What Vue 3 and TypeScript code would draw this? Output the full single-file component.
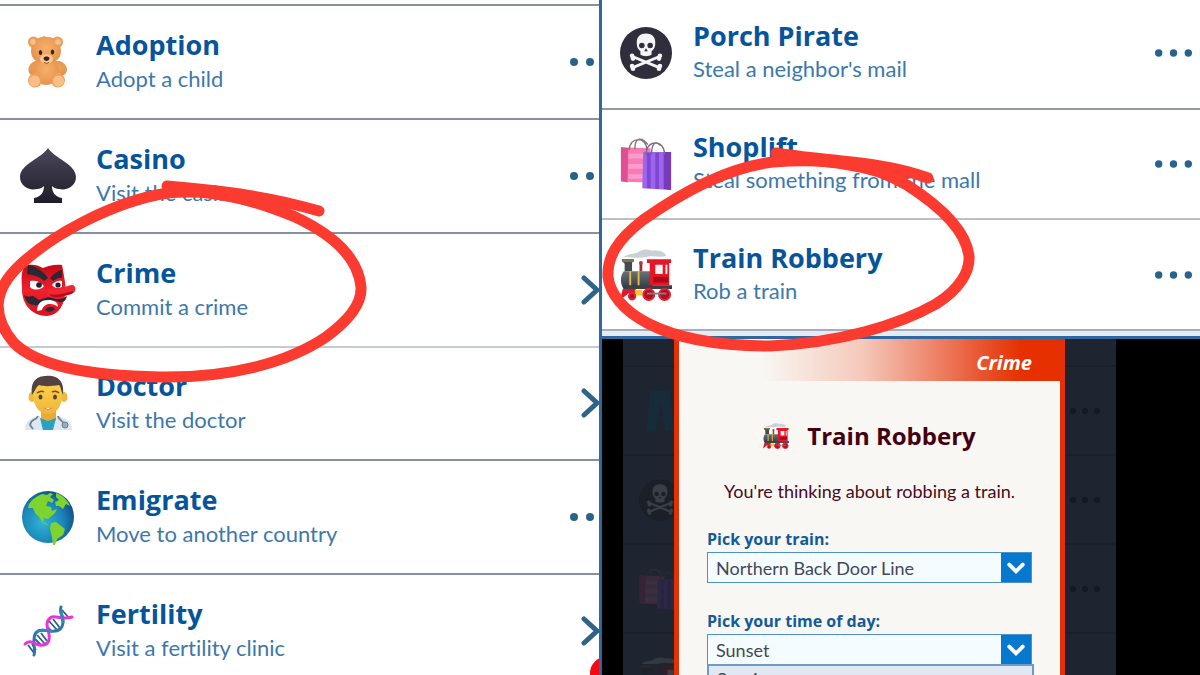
<script setup lang="ts">
import { ref } from 'vue'

interface Item {
  icon: string
  title: string
  text: string
  action: 'dots' | 'arrow'
}

const activities: Item[] = [
  { icon: 'bear', title: 'Adoption', text: 'Adopt a child', action: 'dots' },
  { icon: 'spade', title: 'Casino', text: 'Visit the casino', action: 'dots' },
  { icon: 'mask', title: 'Crime', text: 'Commit a crime', action: 'arrow' },
  { icon: 'doctor', title: 'Doctor', text: 'Visit the doctor', action: 'arrow' },
  { icon: 'globe', title: 'Emigrate', text: 'Move to another country', action: 'dots' },
  { icon: 'dna', title: 'Fertility', text: 'Visit a fertility clinic', action: 'arrow' },
]

const crimes: Item[] = [
  { icon: 'skull', title: 'Porch Pirate', text: "Steal a neighbor's mail", action: 'dots' },
  { icon: 'bags', title: 'Shoplift', text: 'Steal something from the mall', action: 'dots' },
  { icon: 'train', title: 'Train Robbery', text: 'Rob a train', action: 'dots' },
]

const dimmed: string[] = ['pants', 'skull', 'bags', 'train']

const train = ref('Northern Back Door Line')
const time = ref('Sunset')
</script>

<template>
  <main class="page">
    <svg class="sprites" aria-hidden="true">
      <defs>
        <radialGradient id="gFur" cx=".5" cy=".45" r=".6">
          <stop offset="0" stop-color="#f7b06c" /><stop offset="1" stop-color="#e3924c" />
        </radialGradient>
        <linearGradient id="gSpade" x1="0" y1="0" x2="0" y2="1">
          <stop offset="0" stop-color="#4a4859" /><stop offset="1" stop-color="#1f1c2b" />
        </linearGradient>
        <radialGradient id="gSea" cx=".4" cy=".6" r=".65">
          <stop offset="0" stop-color="#2fb4d6" /><stop offset=".6" stop-color="#1b86b8" /><stop offset="1" stop-color="#124a86" />
        </radialGradient>
        <linearGradient id="gMask" x1="0" y1="0" x2="0" y2="1">
          <stop offset="0" stop-color="#c40a18" /><stop offset=".5" stop-color="#f0202c" /><stop offset="1" stop-color="#d91220" />
        </linearGradient>
        <linearGradient id="gFace" x1="0" y1="0" x2="0" y2="1">
          <stop offset="0" stop-color="#fbd24c" /><stop offset="1" stop-color="#f0b63a" />
        </linearGradient>
        <linearGradient id="gBoiler" x1="0" y1="0" x2="0" y2="1">
          <stop offset="0" stop-color="#68727b" /><stop offset="1" stop-color="#2f3942" />
        </linearGradient>
      </defs>

      <symbol id="bear" viewBox="0 0 56 56">
        <g fill="url(#gFur)">
          <circle cx="13.500" cy="8" r="5.500" /><circle cx="37.500" cy="8" r="5.500" />
          <path d="M15 27C8 30 7 36 10 40c3 3 7 0 8-3h20c1 4 5 6 7 3 4-4 2-10-5-13z" />
          <ellipse cx="26" cy="37" rx="13" ry="14" />
          <path d="M11 17C11 7 19 3 22 3l2-1 2 1c8-1 15 5 15 14s-7 12-15 12-15-3-15-12z" />
        </g>
        <circle cx="13" cy="8" r="2.800" fill="#f8c08b" /><circle cx="38" cy="8" r="2.800" fill="#f8c08b" />
        <ellipse cx="15" cy="46.500" rx="7" ry="7" fill="#ee9f58" /><ellipse cx="38" cy="46.500" rx="7" ry="7" fill="#ee9f58" />
        <ellipse cx="14.500" cy="47" rx="5.500" ry="5.500" fill="#f9bf86" /><ellipse cx="38.500" cy="47" rx="5.500" ry="5.500" fill="#f9bf86" />
        <ellipse cx="26.500" cy="25" rx="6.500" ry="5" fill="#fbc58c" />
        <ellipse cx="20.500" cy="18.500" rx="1.700" ry="2.500" fill="#3c2019" /><ellipse cx="32.500" cy="18" rx="1.700" ry="2.500" fill="#3c2019" />
        <path d="M23.500 24c1-2 5-2 6 0 0 2-2 3-3 3s-3-1-3-3z" fill="#3c2019" />
        <path d="M24 28.500q2.500 2 5 0" stroke="#8a4a2a" stroke-width="1" fill="none" />
      </symbol>

      <symbol id="spade" viewBox="0 0 56 56">
        <path d="M28 0C34 10 56 16 56 29c0 9-9 14-17 12-3 0-6-2-7-3 0 6 3 11 10 12v5H14v-5c7-1 10-6 10-12-1 1-4 3-7 3C9 43 0 38 0 29 0 16 22 10 28 0z" fill="url(#gSpade)" />
      </symbol>

      <symbol id="mask" viewBox="0 0 56 56">
        <path d="M5 4c8-3 14 0 18 2 5-2 12-4 19-3 1 5 2 11 3 17 2 14-2 33-18 34C12 54 2 42 2 28 2 20 0 10 5 4z" fill="url(#gMask)" />
        <path d="M8 3c8 1 16 7 20 13l-4 3C19 14 12 13 7 12z" fill="#2b2734" />
        <path d="M42 8c-4 1-9 4-12 8l3 3c4-3 7-4 9-3z" fill="#2b2734" />
        <path d="M10 19c5-1 10 0 14 5-2 4-11 5-14 1z" fill="#fff" /><path d="M32 23c2-3 6-5 10-4v6c-4 2-8 1-10-2z" fill="#fff" />
        <circle cx="19" cy="23" r="2.800" fill="#1c2230" /><circle cx="38" cy="23" r="2.600" fill="#1c2230" />
        <path d="M4 33c4 3 7 1 9 1l6 4 9-3 8 2c4 0 7 0 9-2l2-1c-1 5-4 7-8 6-4-2-9-2-13 0-4 3-9 4-12 3C9 43 6 40 4 33z" fill="#2b2734" />
        <path d="M28 30c4-4 12-3 23-7 5-1 6 6 2 8-8 3-17 5-22 4-4 0-5-3-3-5z" fill="#ef2734" />
        <path d="M29 32c8 2 16-1 24-3 2 2-3 4-9 5-7 2-13 2-15-2z" fill="#b70b1b" />
        <path d="M17 49c0-8 5-11 11-11s10 2 10 7c-4-4-14-5-16 3z" fill="#fff" />
        <path d="M25 48c3-4 7-4 10-1-2 3-7 4-10 1z" fill="#2b2734" />
      </symbol>

      <symbol id="doctor" viewBox="0 0 56 56">
        <path d="M5 55c0-9 5-12 14-14l9 8 9-8c9 2 15 5 15 14z" fill="#dce7ef" />
        <path d="M21 36h15v9l-8 10-7-9z" fill="#e8ac35" /><path d="M20 43l8 3 8-3-3 12H23z" fill="#28a1c2" />
        <ellipse cx="12" cy="22" rx="3.500" ry="5" fill="#efb83e" /><ellipse cx="44" cy="22" rx="3.500" ry="5" fill="#efb83e" />
        <path d="M13 12C17 3 38 3 42 12c2 14-3 27-14 27S11 26 13 12z" fill="url(#gFace)" />
        <path d="M12 20C10 5 18 1 26 1c9-1 19 3 17 19-2-4-2-8-4-10-7 1-14 2-20 0-3 2-4 6-7 10z" fill="#53423e" />
        <path d="M17 18q4-3 7-1M32 17q4-2 7 1" stroke="#725026" stroke-width="1.500" fill="none" />
        <ellipse cx="20.500" cy="22" rx="2" ry="2.500" fill="#5f4036" /><ellipse cx="35" cy="22" rx="2" ry="2.500" fill="#5f4036" />
        <path d="M24 33q4 3 8 0" fill="#fff" stroke="#d48730" stroke-width="1" />
        <path d="M18 41c-2 5-7 2-8 9l3 4M38 41c1 5 6 5 7 9" stroke="#70818f" stroke-width="1.800" fill="none" /><circle cx="45" cy="50" r="3" fill="#9badb9" stroke="#6b7d8a" />
      </symbol>

      <symbol id="globe" viewBox="0 0 56 56">
        <circle cx="28" cy="28" r="26" fill="url(#gSea)" />
        <g fill="#7fd32e">
          <path d="M9 15c3-5 8-8 13-10l5 1 3-2 3 1-3 3 4 3-2 3-4-2-2 5 5 1 1 4 5-2-2 4-7 6-4-1-1 4 4 2 2 2-6-3-4-6-4-4-2-5-5 0z" />
          <path d="M36 4c7 2 12 8 14 13l-4-2-3 5-4-3-3 0-1-4 4-2-3-3z" />
          <path d="M31 34l5-1 9 7-2 6-6 4-2 6-2 0-1-8-2-8z" />
        </g>
      </symbol>

      <symbol id="dna" viewBox="0 0 56 56">
        <path d="M8 42l6 8M12 41l4 6M17 32l8 9M21 30l6 8M15 36l6 6M29 18l9 10M33 16l7 9M27 23l5 6M42 7l7 8M41 11l4 5" stroke="#315d87" stroke-width="1.800" />
        <g fill="none" stroke-width="3" stroke-linecap="round" stroke-linejoin="round">
          <path d="M14 52C16 47 13 43 14 37C14 25 23 27 30 28C40 29 43 25 43 18C43 13 39 9 41 4" stroke="#2c79a8" />
          <path d="M5 41C10 36 14 41 19 42C28 43 30 38 29 31C28 25 25 21 29 16C34 10 40 18 52 14" stroke="#e935d4" />
          <path d="M18 28C22 26 27 28 31 28M43 19C43 15 42 12 41 9" stroke="#2c8abb" />
        </g>
      </symbol>

      <symbol id="skull" viewBox="0 0 56 56">
        <circle cx="28" cy="28" r="28" fill="#302d3c" />
        <g stroke="#f5f5f7" stroke-width="3" stroke-linecap="round"><path d="M14 32l29 12M42 32L13 44" /></g>
        <g fill="#f5f5f7">
          <circle cx="13" cy="31" r="2.500" /><circle cx="14" cy="34" r="2.500" /><circle cx="43" cy="31" r="2.500" /><circle cx="42" cy="34" r="2.500" />
          <circle cx="14" cy="45" r="2.500" /><circle cx="13" cy="42" r="2.500" /><circle cx="42" cy="45" r="2.500" /><circle cx="43" cy="42" r="2.500" />
          <path d="M18 17c0-7 4-10 10-10s10 3 10 10c0 4-1 7-4 9v4c-3 2-9 2-12 0v-4c-3-2-4-5-4-9z" />
        </g>
        <circle cx="23.500" cy="20" r="3" fill="#302d3c" /><circle cx="32.500" cy="20" r="3" fill="#302d3c" /><path d="M26 26l2-3 2 3z" fill="#302d3c" />
      </symbol>

      <symbol id="bags" viewBox="0 0 56 56">
        <path d="M1 10l32 1v37L1 47z" fill="#f77bb4" /><path d="M1 10l8 1-1 37-7-2z" fill="#dc5094" /><path d="M9 17h22v5H9zm0 11h22v5H9zm0 11h22v5H9z" fill="#fb9dcb" />
        <path d="M10 13C10-2 29-2 29 13M16 12C16-2 24-1 30 7" stroke="#8a7479" stroke-width="1.500" fill="none" />
        <path d="M25 15h30v41l-31-2z" fill="#9d65ed" /><path d="M47 15h8v41l-8-1z" fill="#783abb" /><path d="M29 16h4v38h-4zm9 0h4v39h-4z" fill="#7f47d2" />
        <path d="M28 18C28 1 48 1 48 18M34 18C34 4 39 3 43 8" stroke="#766b81" stroke-width="1.500" fill="none" />
      </symbol>

      <symbol id="train" viewBox="0 0 56 56">
        <path d="M4 9c5-5 12-3 16-6 7-4 12-2 15-1 7-1 12 1 15 5-7 3-13 0-19 1-7 1-13 2-27 1z" fill="#c9d1d4" />
        <path d="M2 11h13l-2 4v9H5v-8l-3-3z" fill="#434b4e" /><path d="M2 11h13v3H3z" fill="#84714b" />
        <path d="M4 24h31v19H4c-4-5-4-14 0-19z" fill="url(#gBoiler)" /><path d="M10 24h2v17h-2zm9 0h2v17h-2z" fill="#f4b932" />
        <path d="M21 14h3v10h-3z" fill="#9b3033" /><circle cx="22.500" cy="15" r="2" fill="#bc3540" />
        <path d="M29 11h26v4h-2v24H32V15h-3z" fill="#e71627" /><path d="M38 17h8v10h-8zM49 17h2v10h-2z" fill="#f5f1f1" /><path d="M36 30h16v6H36z" fill="#aa0819" />
        <path d="M4 39h52v4H4z" fill="#394148" /><path d="M3 43h14v5H9L0 55z" fill="#df182a" /><path d="M16 44h8v6h-8z" fill="#f7c42d" />
        <g fill="#b50e20" stroke="#e02535" stroke-width="2"><circle cx="13" cy="51" r="3.500" /><circle cx="31" cy="49" r="6" /><circle cx="48" cy="49" r="6" /></g>
        <path d="M29 48h21" stroke="#77838a" stroke-width="2" />
      </symbol>

      <symbol id="pants" viewBox="0 0 56 56">
        <path d="M15 1h26l7 54H36L29 16 22 55H10z" fill="#1c7bb0" />
      </symbol>

      <symbol id="dots" viewBox="0 0 40 8"><circle cx="4" cy="4" r="4" /><circle cx="20" cy="4" r="4" /><circle cx="36" cy="4" r="4" /></symbol>
    </svg>

    <section class="panel activities">
      <ul class="list">
        <li v-for="item in activities" :key="item.title" class="row">
          <svg class="icon" aria-hidden="true"><use :href="'#' + item.icon" /></svg>
          <div class="copy"><h2>{{ item.title }}</h2><p>{{ item.text }}</p></div>
          <button type="button" :class="['action', item.action]" :aria-label="item.title">
            <svg v-if="item.action === 'dots'" class="dotset"><use href="#dots" /></svg>
            <svg v-else class="chevron" viewBox="0 0 19 32"><path d="M3 4l13 12L3 28" /></svg>
          </button>
        </li>
      </ul>
      <span class="badge" />
    </section>

    <div class="side">
      <section class="panel crimes">
        <ul class="list">
          <li v-for="item in crimes" :key="item.title" class="row">
            <svg class="icon" aria-hidden="true"><use :href="'#' + item.icon" /></svg>
            <div class="copy"><h2>{{ item.title }}</h2><p>{{ item.text }}</p></div>
            <button type="button" class="action" :aria-label="item.title">
              <svg class="dotset"><use href="#dots" /></svg>
            </button>
          </li>
        </ul>
      </section>

      <section class="stage">
        <div class="backdrop">
          <div v-for="name in dimmed" :key="name" class="ghost">
            <svg class="ghost-icon" aria-hidden="true"><use :href="'#' + name" /></svg>
            <svg class="ghost-dots" aria-hidden="true"><use href="#dots" /></svg>
          </div>
        </div>
        <form class="dialog" @submit.prevent>
          <header>Crime</header>
          <div class="body">
            <h1><svg aria-hidden="true"><use href="#train" /></svg>Train Robbery</h1>
            <p class="lead">You're thinking about robbing a train.</p>
            <label for="train-pick">Pick your train:</label>
            <div class="select">
              <select id="train-pick" v-model="train"><option>Northern Back Door Line</option></select>
              <svg viewBox="0 0 30 30" aria-hidden="true"><path d="M8 12l7 7 7-7" /></svg>
            </div>
            <label for="time-pick">Pick your time of day:</label>
            <div class="select">
              <select id="time-pick" v-model="time"><option>Sunset</option><option>Sunrise</option></select>
              <svg viewBox="0 0 30 30" aria-hidden="true"><path d="M8 12l7 7 7-7" /></svg>
              <div class="menu">Sunrise</div>
            </div>
          </div>
        </form>
      </section>
    </div>

    <svg class="marks" viewBox="0 0 1200 675" preserveAspectRatio="none" aria-hidden="true">
      <path d="M167 193C112 202 52 235 20 265C-8 291-8 317 14 343C38 367 92 376 160 377C232 378 289 362 326 337C351 319 362 303 361 287C358 255 328 232 293 216C257 202 218 188 167 193" />
      <path d="M167 186C214 190 264 195 319 211" /><path d="M172 189C214 192 250 199 282 210" />
      <path d="M773 162C723 168 674 198 643 220C617 240 607 257 608 277C612 309 657 346 770 346C839 343 899 325 936 304C960 289 970 271 969 256C966 231 943 208 907 185C867 162 823 158 773 162" />
      <path d="M776 153C821 161 879 160 928 178" /><path d="M782 157C824 161 867 165 902 179" />
    </svg>
  </main>
</template>

<style>
body { margin: 0; }
</style>

<style scoped>
* { box-sizing: border-box; }
.page {
  position: relative;
  display: grid;
  grid-template-columns: 1fr 1fr;
  height: 100vh;
  overflow: hidden;
  background: #fff;
  font-family: Lato, "Open Sans", sans-serif;
  font-variant-ligatures: none;
}
.sprites { position: absolute; width: 0; height: 0; }
h1, h2, p, ul { margin: 0; padding: 0; }
h1, h2, header, label { font-family: "Open Sans", sans-serif; font-weight: 700; }
.panel { overflow: hidden; }
.activities { position: relative; height: 100vh; padding-top: 4px; }
.list { display: grid; grid-auto-rows: 1fr; list-style: none; }
.activities .list { height: calc(100% + 12px); }
.row {
  display: flex;
  align-items: center;
  border-top: 2px solid #8591a3;
}
.activities .row:nth-child(4) { border-color: #c5c9d0; }
.row .icon { width: 56px; height: 56px; flex: none; margin-left: 20px; }
.copy { flex: 1; margin-left: 20px; }
h2 { color: #06549a; font-size: 27px; line-height: 34px; }
.copy p { color: #3d78ac; font-size: 22px; line-height: 34px; white-space: nowrap; }
.action { flex: none; display: flex; padding: 0; border: 0; background: none; }
.dotset { width: 40px; height: 8px; fill: #28638c; }
.activities .dots { margin-right: -10px; }
.chevron { width: 19px; height: 32px; fill: none; stroke: #2f6388; stroke-width: 5; stroke-linecap: round; }
.badge {
  position: absolute;
  right: -22px;
  bottom: -14px;
  width: 32px;
  height: 32px;
  border-radius: 50%;
  background: #f50a14;
}
.side { display: flex; flex-direction: column; height: 100vh; border-left: 3px solid #2f68a0; margin-left: -1px; z-index: 1; }
.crimes { flex: none; height: 339px; background: #e4ebf2; border-bottom: 3px solid #2f68a0; }
.crimes .list { height: 334px; margin-top: -3px; background: #fff; border-bottom: 2px solid #a6aebd; }
.crimes .row { border-color: #9299a3; }
.crimes .row:nth-child(3) { border-color: #bcbfc5; }
.crimes .row .icon { width: 52px; height: 52px; margin-left: 18px; }
.crimes .copy { margin-left: 21px; padding-bottom: 2px; }
.crimes .copy p { line-height: 32px; }
.crimes .dotset { width: 37px; }
.crimes .action { margin-right: 8px; }
.stage { position: relative; flex: 1; min-height: 0; overflow: hidden; display: flex; justify-content: center; background: #000; }
.backdrop { position: absolute; inset: 0 84px 0 21px; padding-top: 26px; background: #1e2530; }
.ghost { display: flex; justify-content: space-between; align-items: center; height: 89px; padding: 0 16px; border-top: 2px solid #19202a; }
.ghost-icon { width: 42px; height: 42px; opacity: .35; filter: brightness(.45); }
.ghost-dots { width: 30px; height: 6px; fill: #121a24; }
.dialog { position: relative; width: 391px; margin-right: 63px; border: solid #e33105; border-width: 0 5px; background: #f8f7f3; }
header {
  height: 42px;
  padding-right: 28px;
  background: linear-gradient(90deg, #f8f7f3 22%, #f5c9bb 48%, #ef8f76 64%, #e74b23 82%, #e63000 90%);
  color: #fff;
  font-size: 20px;
  font-style: italic;
  line-height: 47px;
  text-align: right;
}
.body { padding: 35px 28px 0; color: #4a0a1b; }
h1 { display: flex; justify-content: center; align-items: center; gap: 18px; font-size: 24px; line-height: 40px; color: #43000f; }
h1 svg { width: 26px; height: 26px; }
.lead { margin-top: 21px; font-size: 18px; line-height: 28px; text-align: center; white-space: nowrap; }
label { display: block; margin-top: 21px; color: #115b98; font-size: 16px; line-height: 26px; }
.select { position: relative; display: flex; height: 31px; border: 1px solid #4d93c8; background: #f5fcff; }
.select + label { margin-top: 25px; }
select { flex: 1; appearance: none; padding: 0 8px; border: 0; background: none; color: #434756; font: 18px Lato, sans-serif; }
.select svg { width: 30px; background: #0678cd; fill: none; stroke: #fff; stroke-width: 4; stroke-linecap: round; }
.menu { position: absolute; top: 29px; left: -1px; right: -3px; padding-left: 8px; border: 2px solid #6d9bc1; background: #e0e9f3; color: #434756; font-size: 18px; line-height: 26px; }
.marks { position: absolute; z-index: 2; inset: 0; width: 100%; height: 100%; fill: none; stroke: #fb3b30; stroke-width: 11; stroke-linecap: round; pointer-events: none; }
</style>
